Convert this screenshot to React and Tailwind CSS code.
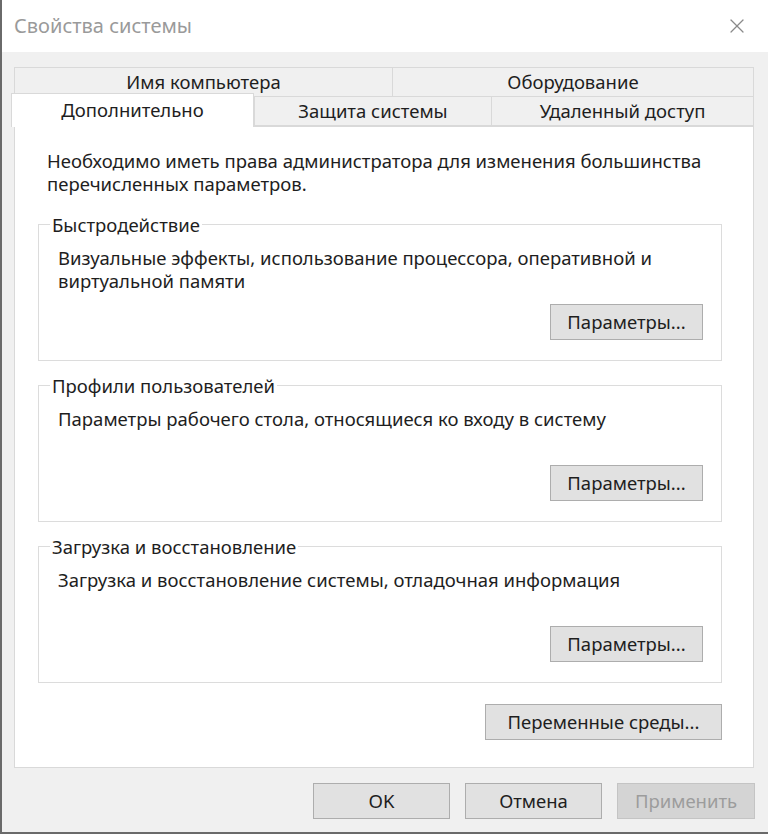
import { X } from 'lucide-react';

function WinButton({ children, className = '', disabled = false }) {
  return (
    <button
      className={
        'h-[36px] border text-[18.5px] leading-none ' +
        (disabled
          ? 'bg-[#d4d4d4] border-[#c4c4c4] text-[#9c9c9c] '
          : 'bg-[#e1e1e1] border-[#adadad] text-[#1e1e1e] ') +
        className
      }
    >
      {children}
    </button>
  );
}

function GroupBox({ title, text }) {
  return (
    <fieldset className="border border-[#dcdcdc]">
      <legend className="ml-[11px] px-[2px] text-[18.5px] leading-[23px] text-[#1e1e1e]">{title}</legend>
      <div className="pl-[19px] pr-[18px] pb-[20px]">
        <div className="mt-[10px] h-[47px] text-[18.5px] leading-[23px] text-[#1e1e1e]">{text}</div>
        <div className="flex justify-end mt-[11px]">
          <WinButton className="w-[153px]">Параметры...</WinButton>
        </div>
      </div>
    </fieldset>
  );
}

function App() {
  return (
    <div
      className="w-[768px] h-[834px] bg-[#f0f0f0] border-l-[2px] border-b-[2px] border-[#6a6a6a] flex flex-col overflow-hidden"
      style={{ fontFamily: '"Noto Sans", "Open Sans", sans-serif' }}
    >
      {/* Title bar */}
      <div className="h-[52px] bg-white flex items-center justify-between pl-[12px] pr-[19px] shrink-0">
        <span className="text-[20px] text-[#9a9a9a]">Свойства системы</span>
        <X size={24} strokeWidth={1.2} className="text-[#8a8a8a]" />
      </div>

      <div className="pl-[12px] pr-[14px] pt-[15px]">
        {/* Tabs row 1 */}
        <div className="flex h-[30px] text-[18.5px] text-[#1e1e1e]">
          <div className="w-[378px] border border-r-0 border-[#d9d9d9] flex items-center justify-center">Имя компьютера</div>
          <div className="flex-1 border border-[#d9d9d9] flex items-center justify-center">Оборудование</div>
        </div>
        {/* Tabs row 2 */}
        <div className="flex h-[29px] text-[18.5px] text-[#1e1e1e]">
          <div className="relative z-10 w-[243px] -ml-[3px] -mt-[4px] h-[34px] bg-white border border-b-0 border-[#d9d9d9] flex items-center justify-center pb-[2px]">
            Дополнительно
          </div>
          <div className="w-[237px] border border-t-0 border-r-0 border-[#d9d9d9] flex items-center justify-center">Защита системы</div>
          <div className="flex-1 border border-t-0 border-[#d9d9d9] flex items-center justify-center">Удаленный доступ</div>
        </div>

        {/* Panel */}
        <div className="h-[642px] bg-white border border-[#d9d9d9] pl-[23px] pr-[31px] pt-[22px]">
          <p className="pl-[9px] text-[18.5px] leading-[23px] text-[#1e1e1e]">
            Необходимо иметь права администратора для изменения большинства
            <br />
            перечисленных параметров.
          </p>
          <div className="mt-[18px] flex flex-col gap-[13px]">
            <GroupBox title="Быстродействие" text={<>Визуальные эффекты, использование процессора, оперативной и<br />виртуальной памяти</>} />
            <GroupBox title="Профили пользователей" text="Параметры рабочего стола, относящиеся ко входу в систему" />
            <GroupBox title="Загрузка и восстановление" text="Загрузка и восстановление системы, отладочная информация" />
          </div>
          <div className="flex justify-end mt-[21px]">
            <WinButton className="w-[237px]">Переменные среды...</WinButton>
          </div>
        </div>
      </div>

      {/* Bottom buttons */}
      <div className="flex justify-end gap-[15px] pr-[13px] pt-[15px]">
        <WinButton className="w-[137px]">OK</WinButton>
        <WinButton className="w-[137px]">Отмена</WinButton>
        <WinButton className="w-[138px]" disabled>Применить</WinButton>
      </div>
    </div>
  );
}

export default App;
